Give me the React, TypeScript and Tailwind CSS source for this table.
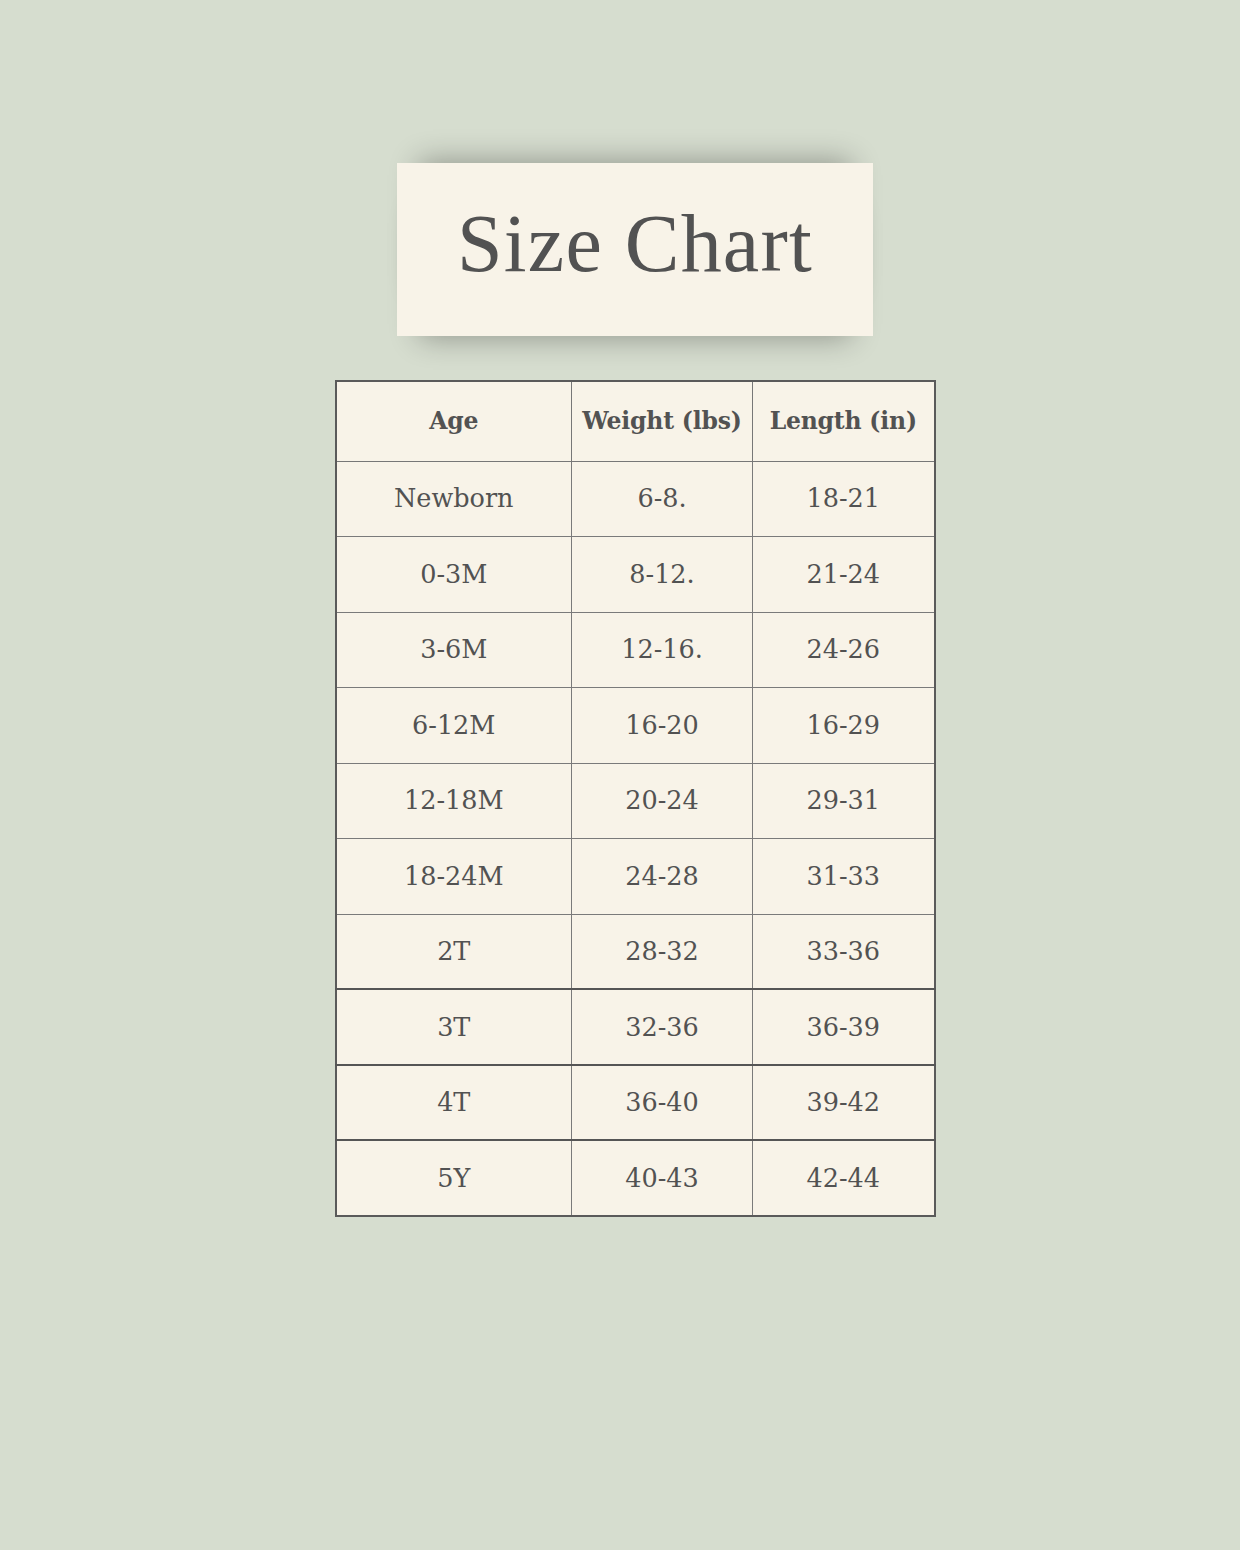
const rows: [string, string, string][] = [
  ["Newborn", "6-8.", "18-21"],
  ["0-3M", "8-12.", "21-24"],
  ["3-6M", "12-16.", "24-26"],
  ["6-12M", "16-20", "16-29"],
  ["12-18M", "20-24", "29-31"],
  ["18-24M", "24-28", "31-33"],
  ["2T", "28-32", "33-36"],
  ["3T", "32-36", "36-39"],
  ["4T", "36-40", "39-42"],
  ["5Y", "40-43", "42-44"],
];

export default function App() {
  return (
    <div className="min-h-[1550px] w-full bg-[#d6ddcf] pl-[30px] pt-[163px] flex flex-col items-center text-[#525252] font-['DejaVu_Serif',serif]">
      <div className="w-[476px] h-[173px] bg-[#f8f3e8] flex items-center justify-center shadow-[0_-24px_28px_-22px_rgba(0,0,0,0.32),0_24px_28px_-22px_rgba(0,0,0,0.32)]">
        <h1 className="font-['Liberation_Serif',serif] text-[82px] leading-none tracking-[1.2px] mb-[12px]">
          Size Chart
        </h1>
      </div>

      <table className="mt-[44px] w-[599px] border-collapse border-2 border-[#5a5a5a] bg-[#f8f3e8] table-fixed">
        <colgroup>
          <col className="w-[236px]" />
          <col className="w-[181px]" />
          <col className="w-[182px]" />
        </colgroup>
        <thead>
          <tr className="h-[80px]">
            {["Age", "Weight (lbs)", "Length (in)"].map((h) => (
              <th
                key={h}
                className="border border-[#777] text-center font-bold text-[23.5px] tracking-[-0.2px] p-0"
              >
                {h}
              </th>
            ))}
          </tr>
        </thead>
        <tbody>
          {rows.map((r, i) => (
            <tr
              key={r[0]}
              className={
                (i % 2 === 0 ? "h-[75px] " : "h-[76px] ") +
                (i >= 7 ? "border-t-2 border-t-[#555]" : "")
              }
            >
              {r.map((c, j) => (
                <td
                  key={j}
                  className="border-x border-b border-[#7a7a7a] text-center text-[25.5px] font-normal p-0"
                >
                  {c}
                </td>
              ))}
            </tr>
          ))}
        </tbody>
      </table>
    </div>
  );
}
